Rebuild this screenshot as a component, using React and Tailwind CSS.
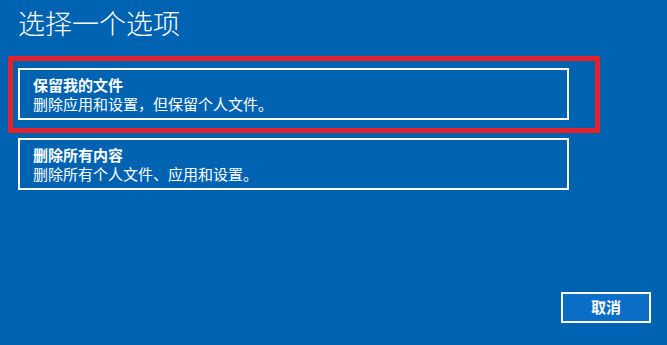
import React from 'react';

const options = [
  { title: '保留我的文件', desc: '删除应用和设置，但保留个人文件。', marked: true },
  { title: '删除所有内容', desc: '删除所有个人文件、应用和设置。', marked: false },
];

function OptionCard({ title, desc }) {
  return (
    <div className="w-[551px] border-2 border-white pl-[13px] pt-[5px] pb-[5px] text-white text-[15px] leading-[19px]">
      <div className="font-bold">{title}</div>
      <div>{desc}</div>
    </div>
  );
}

export default function App() {
  return (
    <div
      className="w-[667px] h-[345px] bg-[#0063b1] flex flex-col overflow-hidden"
      style={{ fontFamily: '"Microsoft YaHei", "Noto Sans CJK SC", "Noto Sans", sans-serif' }}
    >
      <h1 className="pl-[18px] pt-[3px] text-[27px] leading-[40px] font-light text-white">选择一个选项</h1>

      <div className="mt-[13px] ml-[8px] w-[592px] border-[5px] border-[#e5222b] pt-[7px] pb-[8px] pl-[5px]">
        <OptionCard {...options[0]} />
      </div>

      <div className="mt-[5px] ml-[18px]">
        <OptionCard {...options[1]} />
      </div>

      <div className="mt-auto self-end mr-[16px] mb-[22px]">
        <button className="w-[90px] h-[31px] border-2 border-white bg-[#0a6dc6] text-white text-[15px] font-bold flex items-center justify-center">
          取消
        </button>
      </div>
    </div>
  );
}
